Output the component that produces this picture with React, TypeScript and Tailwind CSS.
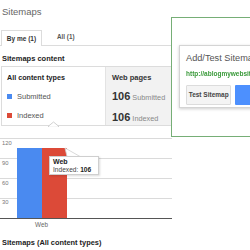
import React from "react";

export default function App() {
  return (
    <div className="relative w-[250px] h-[250px] overflow-hidden bg-white font-['Liberation_Sans',Arial,sans-serif] text-[#222]">
      {/* Title */}
      <div className="h-[30px] pl-[2px] pt-[6px] text-[9.5px] leading-[12px] text-[#666]">Sitemaps</div>

      {/* Tabs */}
      <div className="flex h-[16px] items-end border-b border-[#dcdcdc]">
        <div className="-mb-px ml-[1px] flex h-[16px] w-[41px] items-center justify-center border border-b-0 border-[#dcdcdc] bg-white text-[6.5px] font-bold text-[#333]">
          By me (1)
        </div>
        <div className="ml-[15px] flex h-[16px] items-center text-[6.3px] font-bold text-[#555]">All (1)</div>
      </div>

      {/* Section title */}
      <div className="h-[20px] pl-[2px] pt-[8px] text-[7.5px] font-bold leading-[9px] text-[#222]">Sitemaps content</div>

      {/* Content box */}
      <div className="relative ml-[1px] flex h-[60px] w-[260px] border border-[#dcdcdc]">
        <div className="w-[103px] pl-[5px] pt-[6px]">
          <div className="text-[7.2px] font-bold leading-[9px] text-[#222]">All content types</div>
          <div className="mt-[10px] flex items-center gap-[5px] text-[7.5px] leading-[9px] text-[#555]">
            <span className="h-[5px] w-[5px] bg-[#4a8af0]" />
            Submitted
          </div>
          <div className="mt-[10px] flex items-center gap-[5px] text-[7.5px] leading-[9px] text-[#555]">
            <span className="h-[5px] w-[5px] bg-[#dc4a38]" />
            Indexed
          </div>
        </div>
        <div className="flex-1 border-l border-[#e3e3e3] bg-[#f2f2f2] pl-[6px] pt-[6px]">
          <div className="text-[7.5px] font-bold leading-[9px] text-[#333]">Web pages</div>
          <div className="mt-[8px] flex items-baseline gap-[2px] leading-[12px]">
            <span className="text-[11px] font-bold text-[#333]">106</span>
            <span className="text-[7.3px] text-[#888]">Submitted</span>
          </div>
          <div className="mt-[7px] flex items-baseline gap-[2px] leading-[12px]">
            <span className="text-[11px] font-bold text-[#333]">106</span>
            <span className="text-[7.3px] text-[#888]">Indexed</span>
          </div>
        </div>
        <svg className="absolute left-[46px] top-[54px]" width="12" height="6" viewBox="0 0 12 6">
          <polygon points="0,5.5 5.5,1 11,5.5" fill="#fff" stroke="#d0d0d0" strokeWidth="1" />
          <rect x="1" y="5.2" width="9" height="1" fill="#fff" />
        </svg>
      </div>

      {/* Chart */}
      <div className="relative h-[106px]">
        <svg width="250" height="106" viewBox="0 0 250 106">
          {[12, 32, 52, 72].map((y) => (
            <line key={y} x1="0" x2="172" y1={y + 0.5} y2={y + 0.5} stroke="#dadada" strokeWidth="1" />
          ))}
          <text x="2" y="19" fontSize="5.8" fill="#777" fontFamily="Liberation Sans, Arial, sans-serif">120</text>
          <text x="2" y="39" fontSize="5.8" fill="#777" fontFamily="Liberation Sans, Arial, sans-serif">90</text>
          <text x="2" y="59" fontSize="5.8" fill="#777" fontFamily="Liberation Sans, Arial, sans-serif">60</text>
          <text x="2" y="78" fontSize="5.8" fill="#777" fontFamily="Liberation Sans, Arial, sans-serif">30</text>
          <rect x="17" y="22" width="25" height="70" fill="#4a8af0" />
          <rect x="42" y="22" width="25" height="70" fill="#dc4a38" />
          <line x1="0" x2="172" y1="92.5" y2="92.5" stroke="#555" strokeWidth="1" />
          <text x="41.5" y="100.5" fontSize="6.3" fill="#666" textAnchor="middle" fontFamily="Liberation Sans, Arial, sans-serif">Web</text>
          <polygon points="67,30.5 65,22 80,30.5" fill="#fff" stroke="#cfcfcf" strokeWidth="0.8" />
        </svg>
        <div className="absolute left-[49px] top-[30px] h-[19px] w-[50px] border border-[#cfcfcf] bg-white pl-[3px] pt-[1px] shadow-[1px_1px_2px_rgba(0,0,0,0.15)]">
          <div className="text-[7px] font-bold leading-[8px] text-[#222]">Web</div>
          <div className="text-[6.6px] leading-[8px] text-[#444]">
            Indexed: <span className="font-bold text-[#222]">106</span>
          </div>
        </div>
      </div>

      <div className="pl-[2px] pt-[6px] text-[7.4px] font-bold leading-[9px] text-[#222]">Sitemaps (All content types)</div>

      {/* Overlay panel */}
      <div className="absolute left-[171px] top-[17px] h-[120px] w-[100px] border border-[#76ae76] bg-white pl-[7px] pt-[27px]">
        <div className="h-[63px] w-[90px] border border-[#d4d4d4] bg-white pl-[6px] pt-[7px] shadow-[0_1px_3px_rgba(0,0,0,0.2)]">
          <div className="whitespace-nowrap text-[9.2px] leading-[11px] text-[#555]">Add/Test Sitemap</div>
          <div className="mt-[6px] whitespace-nowrap text-[6.5px] font-bold leading-[8px] text-[#3a9a3a] blur-[0.4px]">
            http://ablogmywebsite.com/sitemap.xml
          </div>
          <div className="mt-[7px] flex gap-[4px]">
            <div className="flex h-[20px] w-[55px] items-center justify-center rounded-[1px] border border-[#dcdcdc] bg-[#f4f4f4] text-[6.5px] font-bold text-[#444]">
              Test Sitemap
            </div>
            <div className="h-[20px] w-[40px] rounded-[1px] bg-[#4d90fe]" />
          </div>
        </div>
      </div>
    </div>
  );
}
